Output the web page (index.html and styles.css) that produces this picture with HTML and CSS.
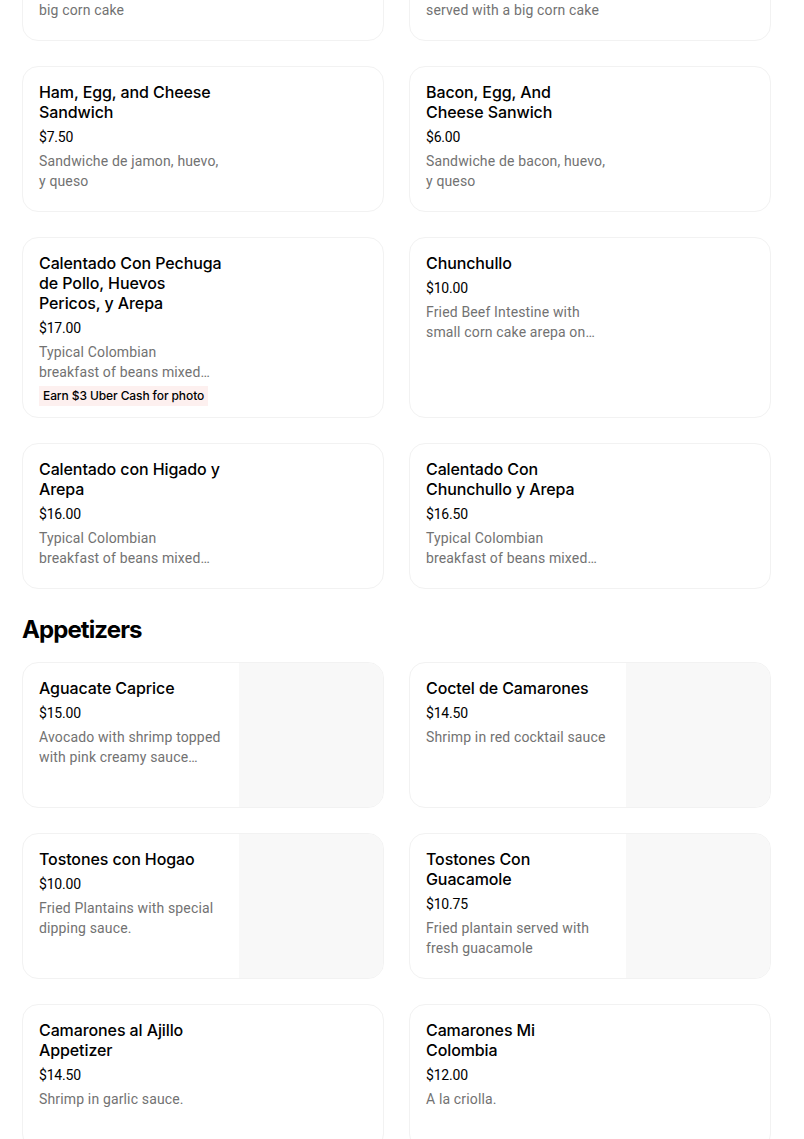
FILE: index.html
```html
<!DOCTYPE html>
<html lang="en">
<head>
<meta charset="utf-8">
<title>Menu</title>
<link rel="stylesheet" href="styles.css">
</head>
<body>
<main class="menu">
  <section class="section">
    <div class="grid">
      <article class="card">
        <div class="info">
          <h3 class="title">Huevos Pericos con Arepa y Queso</h3>
          <div class="price">$8.00</div>
          <p class="desc">Eggs with tomato and onion,<br>big corn cake</p>
        </div>
      </article>
      <article class="card">
        <div class="info">
          <h3 class="title">Huevos con Chorizo y Arepa</h3>
          <div class="price">$9.00</div>
          <p class="desc">Eggs with chorizo sausage<br>served with a big corn cake</p>
        </div>
      </article>
      <article class="card">
        <div class="info">
          <h3 class="title">Ham, Egg, and Cheese Sandwich</h3>
          <div class="price">$7.50</div>
          <p class="desc">Sandwiche de jamon, huevo, y queso</p>
        </div>
      </article>
      <article class="card">
        <div class="info">
          <h3 class="title">Bacon, Egg, And Cheese Sanwich</h3>
          <div class="price">$6.00</div>
          <p class="desc">Sandwiche de bacon, huevo, y queso</p>
        </div>
      </article>
      <article class="card">
        <div class="info">
          <h3 class="title">Calentado Con Pechuga de Pollo, Huevos Pericos, y Arepa</h3>
          <div class="price">$17.00</div>
          <p class="desc">Typical Colombian<br>breakfast of beans mixed…</p>
          <span class="badge">Earn $3 Uber Cash for photo</span>
        </div>
      </article>
      <article class="card">
        <div class="info">
          <h3 class="title">Chunchullo</h3>
          <div class="price">$10.00</div>
          <p class="desc">Fried Beef Intestine with<br>small corn cake arepa on…</p>
        </div>
      </article>
      <article class="card">
        <div class="info">
          <h3 class="title">Calentado con Higado y Arepa</h3>
          <div class="price">$16.00</div>
          <p class="desc">Typical Colombian<br>breakfast of beans mixed…</p>
        </div>
      </article>
      <article class="card">
        <div class="info">
          <h3 class="title">Calentado Con Chunchullo y Arepa</h3>
          <div class="price">$16.50</div>
          <p class="desc">Typical Colombian<br>breakfast of beans mixed…</p>
        </div>
      </article>
    </div>
  </section>

  <section class="section">
    <h2 class="heading">Appetizers</h2>
    <div class="grid">
      <article class="card">
        <div class="info">
          <h3 class="title">Aguacate Caprice</h3>
          <div class="price">$15.00</div>
          <p class="desc">Avocado with shrimp topped<br>with pink creamy sauce…</p>
        </div>
        <div class="thumb"></div>
      </article>
      <article class="card">
        <div class="info">
          <h3 class="title">Coctel de Camarones</h3>
          <div class="price">$14.50</div>
          <p class="desc">Shrimp in red cocktail sauce</p>
        </div>
        <div class="thumb"></div>
      </article>
      <article class="card">
        <div class="info">
          <h3 class="title">Tostones con Hogao</h3>
          <div class="price">$10.00</div>
          <p class="desc">Fried Plantains with special dipping sauce.</p>
        </div>
        <div class="thumb"></div>
      </article>
      <article class="card">
        <div class="info">
          <h3 class="title">Tostones Con Guacamole</h3>
          <div class="price">$10.75</div>
          <p class="desc">Fried plantain served with fresh guacamole</p>
        </div>
        <div class="thumb"></div>
      </article>
      <article class="card">
        <div class="info">
          <h3 class="title">Camarones al Ajillo Appetizer</h3>
          <div class="price">$14.50</div>
          <p class="desc">Shrimp in garlic sauce.</p>
        </div>
      </article>
      <article class="card">
        <div class="info">
          <h3 class="title">Camarones Mi Colombia</h3>
          <div class="price">$12.00</div>
          <p class="desc">A la criolla.</p>
        </div>
      </article>
    </div>
  </section>
</main>
</body>
</html>
```

FILE: styles.css
```css
* {
  box-sizing: border-box;
}

html, body {
  margin: 0;
  padding: 0;
  background: #ffffff;
}

body {
  font-family: Inter, "Liberation Sans", Arial, sans-serif;
  color: #000000;
  overflow: hidden;
}

.menu {
  margin-top: -105px;
  padding: 0 33px 0 22px;
}

.section + .section {
  margin-top: 25px;
}

.heading {
  margin: 0 0 16px;
  font-size: 24px;
  line-height: 32px;
  font-weight: 700;
  letter-spacing: -0.9px;
}

.grid {
  display: grid;
  grid-template-columns: 362px 362px;
  column-gap: 25px;
  row-gap: 25px;
}

.card {
  display: flex;
  min-height: 146px;
  border: 1px solid #f2f2f2;
  border-radius: 16px;
  overflow: hidden;
  background: #ffffff;
}

.info {
  width: 216px;
  flex: 0 0 216px;
  padding: 15px 16px 11px;
  display: flex;
  flex-direction: column;
  align-items: flex-start;
}

.title {
  margin: 0;
  font-size: 16px;
  line-height: 20px;
  font-weight: 500;
  letter-spacing: -0.1px;
}

.price {
  margin-top: 5px;
  font-family: Roboto, "Liberation Sans", Arial, sans-serif;
  font-size: 14px;
  line-height: 20px;
  font-weight: 400;
  letter-spacing: -0.2px;
}

.desc {
  margin: 4px 0 0;
  font-family: Roboto, "Liberation Sans", Arial, sans-serif;
  font-size: 14px;
  line-height: 20px;
  color: #727272;
  letter-spacing: 0.15px;
}

.badge {
  margin-top: 4px;
  padding: 0 4px;
  font-size: 12px;
  line-height: 20px;
  font-weight: 500;
  letter-spacing: -0.1px;
  background: #fdf0ef;
  color: #000000;
}

.thumb {
  flex: 1 1 auto;
  background: #f8f8f8;
}
```
